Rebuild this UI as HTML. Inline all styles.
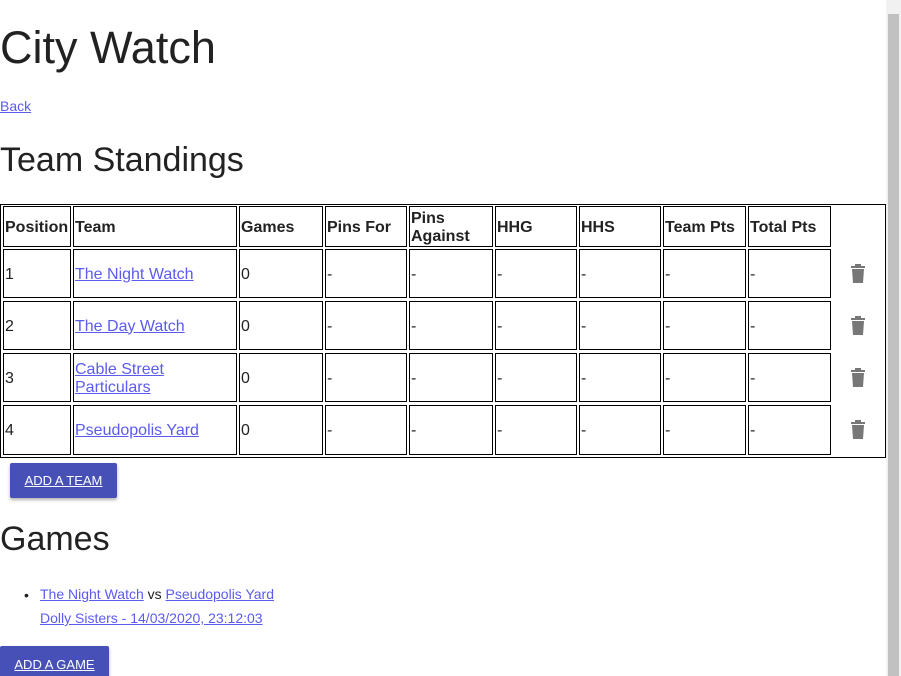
<!DOCTYPE html>
<html><head><meta charset="utf-8"><style>
html,body{margin:0;width:901px;height:676px;overflow:hidden}
body{font-family:"Liberation Sans",sans-serif;color:#222;background:#fff;position:relative}
.a{position:absolute;white-space:nowrap}
a{color:#5b5bf0;text-decoration:underline}
.c{position:absolute;border:1px solid #000;box-sizing:border-box;font-size:16px;padding-left:1px;padding-top:2px;display:flex;align-items:center;line-height:18px}
.h{font-weight:bold}
.btn{position:absolute;background:#4650b6;color:#fff;font-size:13px;display:flex;align-items:center;justify-content:center;border-radius:2px;box-shadow:0 2px 3px rgba(0,0,0,.3);text-decoration:underline}
.sb{position:absolute;left:886px;top:0;width:15px;height:676px;background:#f1f1f1}
.sb div{position:absolute;left:2px;right:2px;top:14px;bottom:0;background:#c1c1c1}
</style></head><body>
<div class="a" style="left:0;top:22px;font-size:45px;line-height:52px">City Watch</div>
<div class="a" style="left:0;top:98px;font-size:14px"><a>Back</a></div>
<div class="a" style="left:0;top:140px;font-size:34px;line-height:40px">Team Standings</div>
<div style="position:absolute;left:0;top:204px;width:886px;height:254px;border:1px solid #000;box-sizing:border-box"></div>
<div id="t"></div>
<div class="btn" style="left:10px;top:463px;width:107px;height:35px">ADD A TEAM</div>
<div class="a" style="left:0;top:519px;font-size:34px;line-height:40px">Games</div>
<div class="a" style="left:24px;top:583px;font-size:14px;line-height:24px">•</div>
<div class="a" style="left:40px;top:582px;font-size:14px;line-height:24px"><a>The Night Watch</a> vs <a>Pseudopolis Yard</a><br><a>Dolly Sisters - 14/03/2020, 23:12:03</a></div>
<div class="btn" style="left:0;top:646px;width:109px;height:36px">ADD A GAME</div>
<div class="sb"><div></div></div>
<script>
var xs=[[3,71],[73,237],[239,323],[325,407],[409,493],[495,577],[579,661],[663,746],[748,831]];
var ys=[[206,247],[249,298],[301,350],[353,402],[405,455]];
var hd=["Position","Team","Games","Pins For","Pins<br>Against","HHG","HHS","Team Pts","Total Pts"];
var tm=["The Night Watch","The Day Watch","Cable Street<br>Particulars","Pseudopolis Yard"];
var h="";
for(var r=0;r<5;r++){for(var c=0;c<9;c++){var t;
if(r==0)t=hd[c];else if(c==0)t=r;else if(c==1)t="<a>"+tm[r-1]+"</a>";else if(c==2)t="0";else t="-";
h+='<div class="c'+(r==0?' h':'')+'" style="left:'+xs[c][0]+'px;top:'+ys[r][0]+'px;width:'+(xs[c][1]-xs[c][0])+'px;height:'+(ys[r][1]-ys[r][0])+'px">'+t+'</div>';}
if(r>0){var y=ys[r][0]+15;h+='<svg style="position:absolute;left:850px;top:'+y+'px" width="16" height="19" viewBox="0 0 16 19"><rect x="1" y="2" width="14" height="2" fill="#777"/><rect x="5" y="0" width="6" height="2" fill="#777"/><path d="M2 5h12l-1 14H3z" fill="#777"/></svg>';}}
document.getElementById("t").innerHTML=h;
</script>
</body></html>
